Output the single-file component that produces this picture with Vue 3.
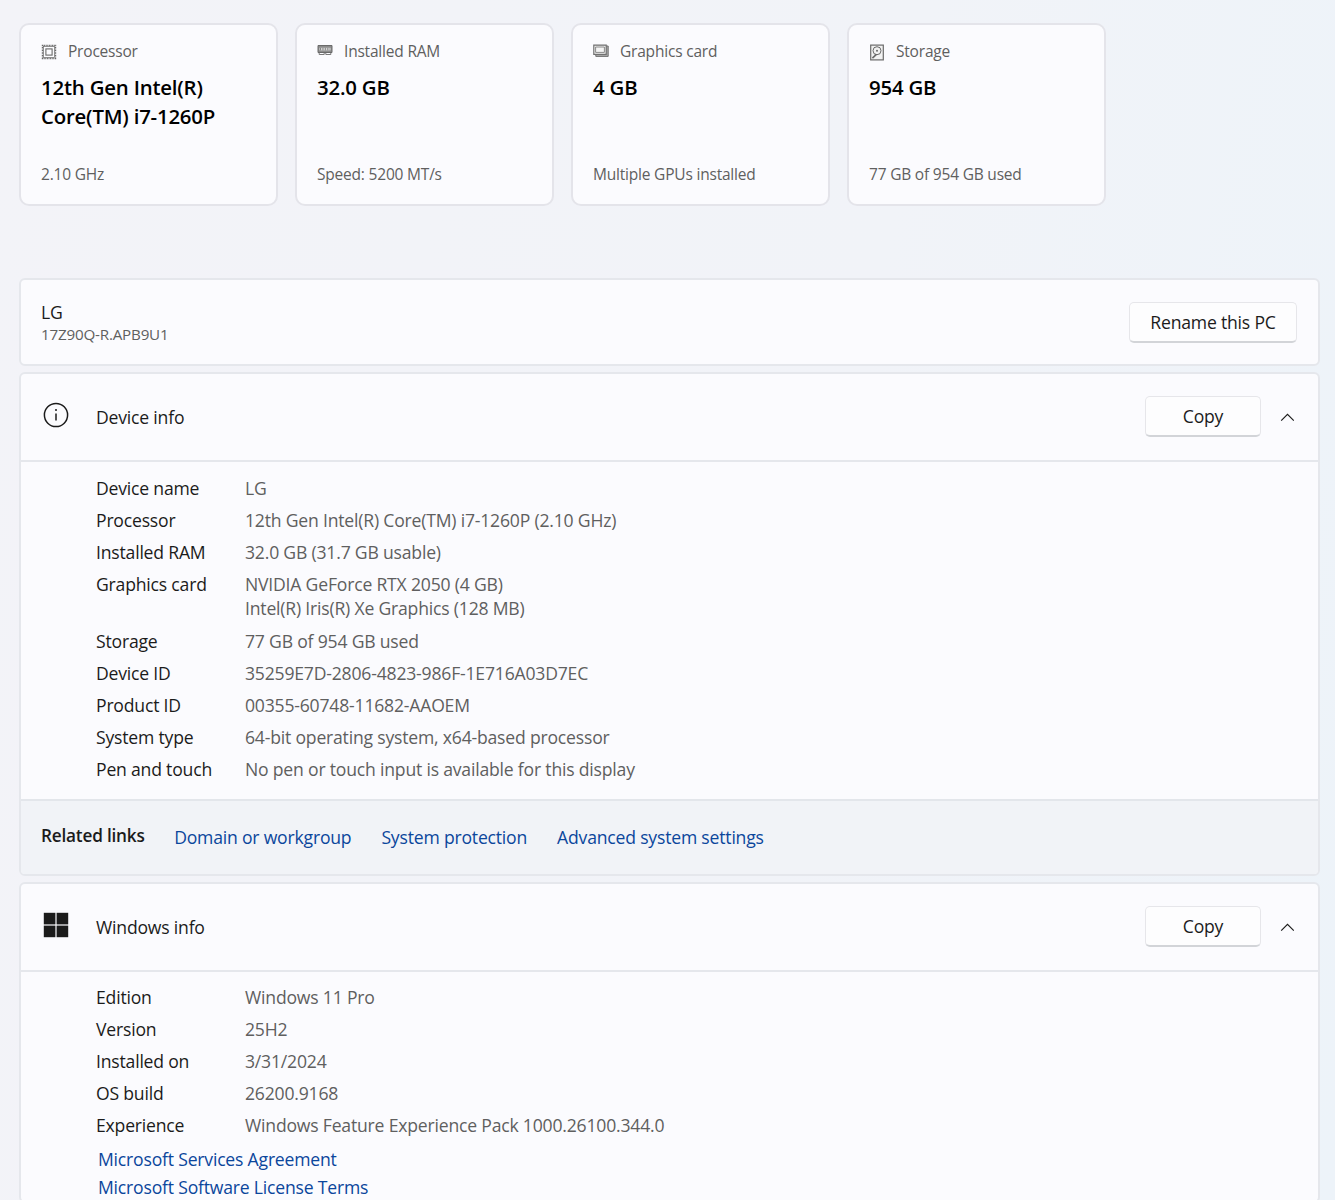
<template>
  <main class="page">
    <section class="spec-cards">
      <article v-for="card in specCards" :key="card.label" class="spec-card">
        <div class="spec-head">
          <svg v-if="card.icon === 'cpu'" class="spec-icon" viewBox="0 -1 16 16" fill="none" stroke="#6a6a6a">
            <rect x="1.5" y="1.5" width="13" height="13" stroke-width="1.4" stroke-dasharray="1 0.6" />
            <rect x="2.6" y="2.6" width="10.8" height="10.8" stroke-width="0.7" />
            <rect x="4.9" y="4.9" width="6.2" height="6.2" stroke-width="1.1" />
          </svg>
          <svg v-else-if="card.icon === 'ram'" class="spec-icon" viewBox="0 0 16 16" fill="none" stroke="#6a6a6a">
            <path d="M1 2.5h14v7H1z" fill="#8b8b8b" stroke-width="1" />
            <path d="M2.6 4.8h10.8v2.6H2.6z" fill="#f4f4f4" stroke="none" />
            <path d="M3.5 4.8v2.6M5.2 4.8v2.6M6.9 4.8v2.6M8.6 4.8v2.6M10.3 4.8v2.6M12 4.8v2.6" stroke-width="0.8" />
            <path d="M2.2 9.5v2h5v-2M8.8 9.5v2h5v-2" stroke-width="0.9" />
          </svg>
          <svg v-else-if="card.icon === 'gpu'" class="spec-icon" viewBox="0 0 16 16" fill="none" stroke="#707070">
            <path d="M2.8 3h12.4v10.4H2.8z" fill="#a9a9a9" stroke-width="1" />
            <path d="M0.8 2.2h12.4v9.2H0.8z" fill="#f4f4f4" stroke-width="1.2" />
            <path d="M2.6 4h8.8v5.4H2.6z" stroke-width="0.8" />
          </svg>
          <svg v-else class="spec-icon" viewBox="0 -1.5 16 16" fill="none" stroke="#6a6a6a">
            <rect x="1.7" y="0.6" width="12.6" height="14.8" fill="#f2f2f2" stroke-width="1.2" />
            <circle cx="8" cy="6.2" r="4" stroke-width="1" />
            <circle cx="8" cy="6.2" r="1" fill="#6a6a6a" stroke="none" />
            <path d="M3.4 13.6l4-3.8" stroke-width="1.6" />
          </svg>
          <span class="spec-label">{{ card.label }}</span>
        </div>
        <h2 class="spec-value">{{ card.value }}</h2>
        <p class="spec-sub">{{ card.sub }}</p>
      </article>
    </section>

    <section class="panel pc-name">
      <div>
        <div class="pc-title">LG</div>
        <div class="pc-model">17Z90Q-R.APB9U1</div>
      </div>
      <button class="btn rename">Rename this PC</button>
    </section>

    <section class="panel">
      <header class="panel-head">
        <svg class="head-icon" viewBox="0 0 26 26" fill="none" stroke="#1b1b1b">
          <circle cx="13" cy="13" r="11.6" stroke-width="1.5" />
          <path d="M13 11.5v7" stroke-width="1.5" />
          <circle cx="13" cy="8" r="1" fill="#1b1b1b" stroke="none" />
        </svg>
        <span class="head-title">Device info</span>
        <button class="btn copy">Copy</button>
        <svg class="chevron" viewBox="0 0 16 10" fill="none" stroke="#1b1b1b" stroke-width="1.3">
          <path d="M1 8.5L8 1.5l7 7" />
        </svg>
      </header>
      <div class="info-grid device-grid">
        <template v-for="row in deviceRows" :key="row.name">
          <div class="info-name">{{ row.name }}</div>
          <div class="info-value">
            <div v-for="line in row.lines" :key="line">{{ line }}</div>
          </div>
        </template>
      </div>
      <footer class="related">
        <span class="related-title">Related links</span>
        <a v-for="link in relatedLinks" :key="link" class="link related-link" href="#">{{ link }}</a>
      </footer>
    </section>

    <section class="panel windows-panel">
      <header class="panel-head">
        <svg class="head-icon" viewBox="0 0 26 26" fill="#1b1b1b">
          <rect x="0.8" y="0.8" width="11.6" height="11.6" />
          <rect x="13.6" y="0.8" width="11.6" height="11.6" />
          <rect x="0.8" y="13.6" width="11.6" height="11.6" />
          <rect x="13.6" y="13.6" width="11.6" height="11.6" />
        </svg>
        <span class="head-title">Windows info</span>
        <button class="btn copy">Copy</button>
        <svg class="chevron" viewBox="0 0 16 10" fill="none" stroke="#1b1b1b" stroke-width="1.3">
          <path d="M1 8.5L8 1.5l7 7" />
        </svg>
      </header>
      <div class="info-grid windows-grid">
        <template v-for="row in windowsRows" :key="row.name">
          <div class="info-name">{{ row.name }}</div>
          <div class="info-value">{{ row.value }}</div>
        </template>
      </div>
      <div class="legal-links">
        <a class="link" href="#">Microsoft Services Agreement</a>
        <a class="link" href="#">Microsoft Software License Terms</a>
      </div>
    </section>
  </main>
</template>

<script setup>
const specCards = [
  { icon: 'cpu', label: 'Processor', value: '12th Gen Intel(R) Core(TM) i7-1260P', sub: '2.10 GHz' },
  { icon: 'ram', label: 'Installed RAM', value: '32.0 GB', sub: 'Speed: 5200 MT/s' },
  { icon: 'gpu', label: 'Graphics card', value: '4 GB', sub: 'Multiple GPUs installed' },
  { icon: 'disk', label: 'Storage', value: '954 GB', sub: '77 GB of 954 GB used' }
]

const deviceRows = [
  { name: 'Device name', lines: ['LG'] },
  { name: 'Processor', lines: ['12th Gen Intel(R) Core(TM) i7-1260P (2.10 GHz)'] },
  { name: 'Installed RAM', lines: ['32.0 GB (31.7 GB usable)'] },
  { name: 'Graphics card', lines: ['NVIDIA GeForce RTX 2050 (4 GB)', 'Intel(R) Iris(R) Xe Graphics (128 MB)'] },
  { name: 'Storage', lines: ['77 GB of 954 GB used'] },
  { name: 'Device ID', lines: ['35259E7D-2806-4823-986F-1E716A03D7EC'] },
  { name: 'Product ID', lines: ['00355-60748-11682-AAOEM'] },
  { name: 'System type', lines: ['64-bit operating system, x64-based processor'] },
  { name: 'Pen and touch', lines: ['No pen or touch input is available for this display'] }
]

const relatedLinks = ['Domain or workgroup', 'System protection', 'Advanced system settings']

const windowsRows = [
  { name: 'Edition', value: 'Windows 11 Pro' },
  { name: 'Version', value: '25H2' },
  { name: 'Installed on', value: '3/31/2024' },
  { name: 'OS build', value: '26200.9168' },
  { name: 'Experience', value: 'Windows Feature Experience Pack 1000.26100.344.0' }
]
</script>

<style scoped>
.page {
  height: 1200px;
  overflow: hidden;
  box-sizing: border-box;
  padding: 23px 15px 0 19px;
  font-family: "Open Sans", "Noto Sans", sans-serif;
  font-size: 17.6px;
  letter-spacing: -0.2px;
  color: #1b1b1b;
  background: linear-gradient(100deg, #f3f3f8 0%, #f1f3f8 60%, #edf3f9 100%);
}

.spec-cards {
  display: flex;
  gap: 17px;
  margin-bottom: 72px;
}

.spec-card {
  width: 259px;
  height: 183px;
  box-sizing: border-box;
  padding: 14px 20px 19px;
  display: flex;
  flex-direction: column;
  background: #fbfbfe;
  border: 2px solid #e4e4ea;
  border-radius: 10px;
}

.spec-head {
  display: flex;
  align-items: center;
  gap: 11px;
  height: 24px;
}

.spec-icon {
  width: 16px;
  height: 16px;
  flex: none;
  overflow: visible;
}

.spec-label {
  font-size: 15.5px;
  color: #5f5f5f;
}

.spec-value {
  margin: 10px 0 0;
  font-size: 20.4px;
  line-height: 29px;
  font-weight: 600;
  color: #000;
  letter-spacing: -0.2px;
}

.spec-sub {
  margin: auto 0 0;
  font-size: 15.5px;
  line-height: 22px;
  color: #5f5f5f;
}

.panel {
  background: #fbfbfe;
  border: 2px solid #e5e7ec;
  border-radius: 6px;
  margin-bottom: 6px;
  overflow: hidden;
}

.pc-name {
  height: 88px;
  box-sizing: border-box;
  padding: 0 21px 0 20px;
  display: flex;
  align-items: center;
  justify-content: space-between;
}

.pc-title {
  font-size: 17.6px;
  line-height: 24px;
}

.pc-model {
  font-size: 15.2px;
  line-height: 20px;
  color: #5f5f5f;
}

.btn {
  font-family: inherit;
  font-size: 17.6px;
  letter-spacing: -0.2px;
  color: #1b1b1b;
  background: #fdfdfe;
  border: 1px solid #e6e6ea;
  border-bottom: 2px solid #d2d4d8;
  border-radius: 5px;
  height: 41px;
  padding: 0;
}

.rename {
  width: 168px;
}

.copy {
  width: 116px;
  margin-left: auto;
  margin-top: -1px;
}

.panel-head {
  height: 86px;
  display: flex;
  align-items: center;
  padding: 0 23px 0 22px;
  border-bottom: 2px solid #e5e7ec;
}

.head-icon {
  width: 26px;
  height: 26px;
  flex: none;
  margin-top: -4px;
}

.head-title {
  margin-left: 27px;
}

.chevron {
  width: 15px;
  height: 9px;
  margin: 0 0 0 19px;
  flex: none;
}

.info-grid {
  display: grid;
  grid-template-columns: 149px 1fr;
  row-gap: 8px;
  padding-left: 75px;
  line-height: 24px;
}

.device-grid {
  padding-top: 14px;
  padding-bottom: 18px;
  border-bottom: 2px solid #e3e6eb;
}

.windows-grid {
  padding-top: 13px;
}

.info-value {
  color: #5f5f5f;
}

.info-value div + div {
  margin-bottom: 1px;
}

.related {
  height: 73px;
  box-sizing: border-box;
  display: flex;
  align-items: center;
  padding: 0 20px;
  background: #f1f3f7;
}

.related-title {
  font-weight: 600;
  font-size: 17.2px;
  margin-right: 29.5px;
  margin-top: -4px;
}

.related-link {
  margin-right: 30px;
  margin-top: -2px;
}

.link {
  color: #0b469c;
  text-decoration: none;
}

.windows-panel {
  margin-bottom: 0;
}

.legal-links {
  display: flex;
  flex-direction: column;
  padding: 8px 0 0 77px;
  line-height: 28px;
}
</style>
